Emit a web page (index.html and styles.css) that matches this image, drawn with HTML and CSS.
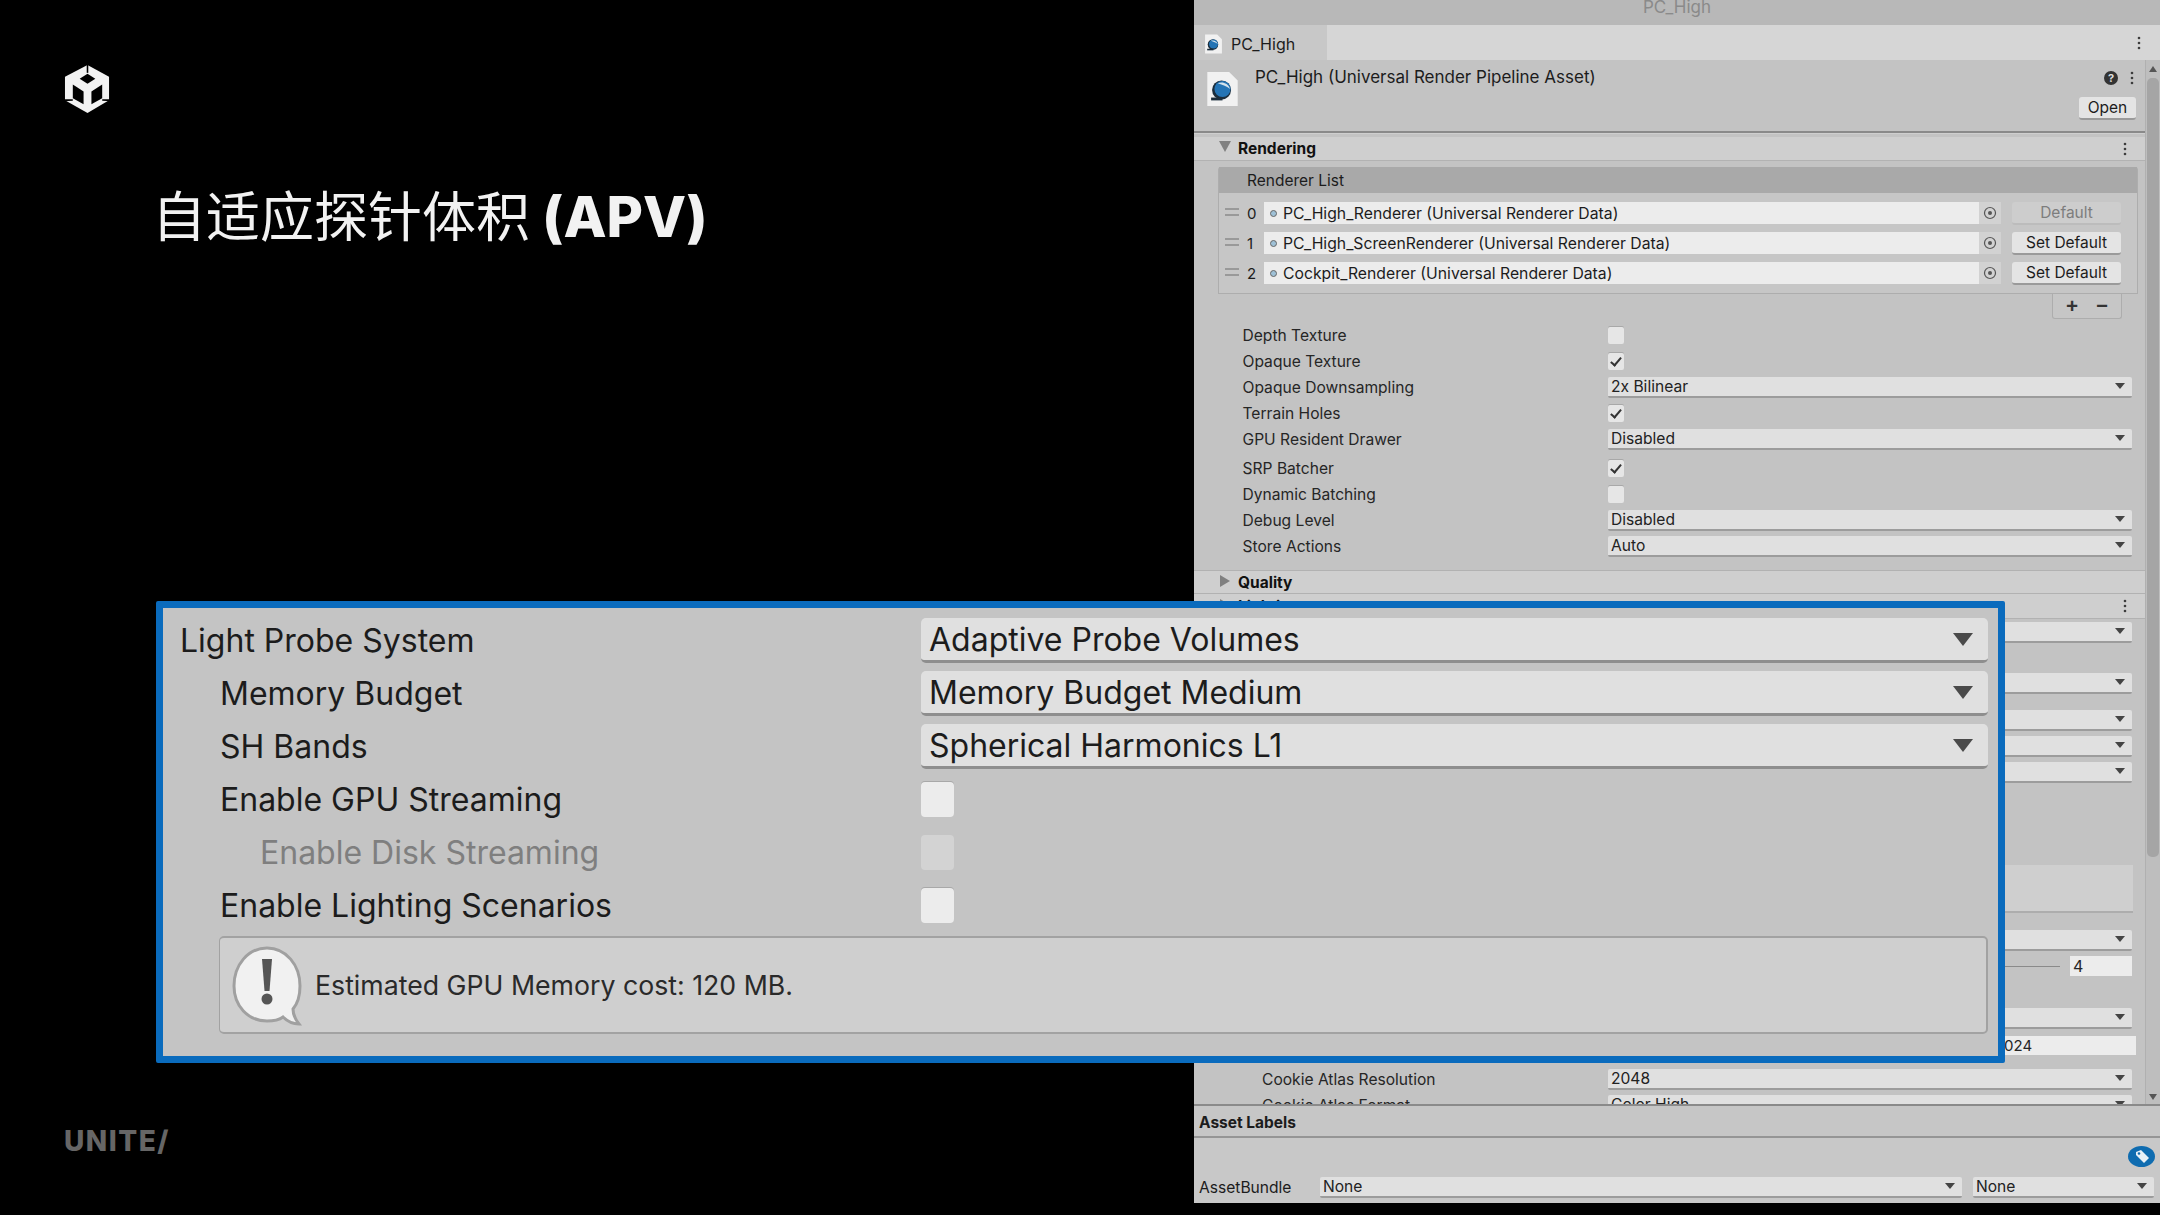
FILE: index.html

```html
<!DOCTYPE html>
<html lang="zh-CN">
<head>
  <meta charset="UTF-8">
  <title>自适应探针体积 (APV)</title>
  <link rel="stylesheet" href="styles.css">
</head>
<body>

<svg class="defs" width="0" height="0">
  <symbol id="kebab" viewBox="0 0 4 14">
    <circle cx="2" cy="2" r="1.3"/><circle cx="2" cy="7" r="1.3"/><circle cx="2" cy="12" r="1.3"/>
  </symbol>
  <symbol id="target" viewBox="0 0 14 14">
    <circle cx="7" cy="7" r="5.5" fill="none" stroke="#555" stroke-width="1.2"/>
    <circle cx="7" cy="7" r="2" fill="#555"/>
  </symbol>
  <symbol id="globe" viewBox="0 0 36 40">
    <path d="M2 2h23l9 9v27H2z" fill="#f1f1f1"/>
    <circle cx="17" cy="21" r="10" fill="#1b2d3c"/>
    <circle cx="18" cy="20" r="8.500" fill="#2474b5"/>
    <path d="M13 14c5-2 11 0 13 6-3-3-8-4-13-6z" fill="#d4e3ec"/>
    <path d="M6 29h12v3H6z" fill="#1b2d3c"/>
  </symbol>
</svg>

<section class="slide">
  <svg class="logo" viewBox="0 0 48 50">
    <path d="M24 0 46 12V36L24 49 1 36V12Z" fill="#f2f2f2"/>
    <g fill="#000">
      <path d="M23.2 0h1.6v8h-1.6z"/>
      <path d="M24 9 32 14 24 19 16 14Z"/>
      <path d="M9 20 20 27V40L9 34Z"/>
      <path d="M39 20 28 27V40L39 34Z"/>
      <path d="M0 35h9v1.5L0 37Z"/>
      <path d="M48 35h-9v1.5l9 .5Z"/>
    </g>
  </svg>
  <h1 class="title">自适应探针体积 <b>(APV)</b></h1>
  <div class="brand">UNITE/</div>
</section>

<aside class="inspector">
  <div class="titlebar">PC_High</div>
  <div class="tabbar">
    <div class="tab"><svg class="tab-icon"><use href="#globe"/></svg>PC_High</div>
    <svg class="kebab"><use href="#kebab"/></svg>
  </div>

  <div class="pane">
    <div class="pane-main">
      <div class="asset-head">
        <svg class="asset-icon"><use href="#globe"/></svg>
        <div class="asset-name">PC_High (Universal Render Pipeline Asset)</div>
        <div class="asset-side">
          <div class="asset-tools">
            <span class="help-dot">?</span>
            <svg class="kebab"><use href="#kebab"/></svg>
          </div>
          <div class="btn btn-open">Open</div>
        </div>
      </div>

      <div class="content">
        <div class="foldout foldout-first"><i class="tri-down"></i>Rendering<svg class="kebab"><use href="#kebab"/></svg></div>

        <div class="list">
          <div class="list-head">Renderer List</div>
          <div class="list-body">
            <div class="list-row">
              <i class="handle"></i><span class="idx">0</span>
              <div class="obj-field"><i class="obj-dot"></i>PC_High_Renderer (Universal Renderer Data)<svg class="target"><use href="#target"/></svg></div>
              <div class="btn btn-set is-off">Default</div>
            </div>
            <div class="list-row">
              <i class="handle"></i><span class="idx">1</span>
              <div class="obj-field"><i class="obj-dot"></i>PC_High_ScreenRenderer (Universal Renderer Data)<svg class="target"><use href="#target"/></svg></div>
              <div class="btn btn-set">Set Default</div>
            </div>
            <div class="list-row">
              <i class="handle"></i><span class="idx">2</span>
              <div class="obj-field"><i class="obj-dot"></i>Cockpit_Renderer (Universal Renderer Data)<svg class="target"><use href="#target"/></svg></div>
              <div class="btn btn-set">Set Default</div>
            </div>
          </div>
        </div>
        <div class="list-foot"><span>+</span><span>−</span></div>

        <div class="rows">
          <div class="row"><span>Depth Texture</span><i class="check"></i></div>
          <div class="row"><span>Opaque Texture</span><i class="check is-on"></i></div>
          <div class="row"><span>Opaque Downsampling</span><div class="drop">2x Bilinear<i class="caret"></i></div></div>
          <div class="row"><span>Terrain Holes</span><i class="check is-on"></i></div>
          <div class="row"><span>GPU Resident Drawer</span><div class="drop">Disabled<i class="caret"></i></div></div>
          <div class="row mt-3"><span>SRP Batcher</span><i class="check is-on"></i></div>
          <div class="row"><span>Dynamic Batching</span><i class="check"></i></div>
          <div class="row"><span>Debug Level</span><div class="drop">Disabled<i class="caret"></i></div></div>
          <div class="row"><span>Store Actions</span><div class="drop">Auto<i class="caret"></i></div></div>
        </div>

        <div class="foldout foldout-quality"><i class="tri-right"></i>Quality</div>
        <div class="foldout foldout-light"><i class="tri-right"></i>Lighting<svg class="kebab"><use href="#kebab"/></svg></div>

        <div class="row"><span></span><div class="drop"><i class="caret"></i></div></div>
        <div class="row mt-25"><span></span><div class="drop"><i class="caret"></i></div></div>
        <div class="row mt-11"><span></span><div class="drop"><i class="caret"></i></div></div>
        <div class="row"><span></span><div class="drop"><i class="caret"></i></div></div>
        <div class="row"><span></span><div class="drop"><i class="caret"></i></div></div>
        <div class="stub-box"></div>
        <div class="row mt-14"><span></span><div class="drop"><i class="caret"></i></div></div>
        <div class="row"><span></span><div class="slider"><i class="slider-line"></i><div class="num">4</div></div></div>
        <div class="row mt-26"><span></span><div class="drop"><i class="caret"></i></div></div>
        <div class="row mt-1"><span></span><div class="num num-wide">1024</div></div>
        <div class="row row-sub mt-8"><span>Cookie Atlas Resolution</span><div class="drop">2048<i class="caret"></i></div></div>
        <div class="row row-sub"><span>Cookie Atlas Format</span><div class="drop">Color High<i class="caret"></i></div></div>
      </div>
    </div>
    <div class="scrollbar">
      <i class="sb-up"></i>
      <div class="sb-thumb"></div>
      <i class="sb-down"></i>
    </div>
  </div>

  <div class="labels-head">Asset Labels</div>
  <div class="labels-body">
    <div class="tag-line">
      <svg class="tag" viewBox="0 0 27 21">
        <ellipse cx="13.500" cy="10.500" rx="13.500" ry="10.500" fill="#0f6cb0"/>
        <path d="M8 6l5-2 8 8-5 5-8-8z" fill="#e8f1f7"/>
        <circle cx="11" cy="7.500" r="1.300" fill="#0f6cb0"/>
      </svg>
    </div>
    <div class="bundle">
      <span class="bundle-label">AssetBundle</span>
      <div class="drop drop-main">None<i class="caret"></i></div>
      <div class="drop drop-variant">None<i class="caret"></i></div>
    </div>
  </div>
</aside>

<!-- blue callout sits over the inspector -->
<div class="callout">
  <div class="big-row"><span>Light Probe System</span><div class="big-drop">Adaptive Probe Volumes<i class="big-caret"></i></div></div>
  <div class="big-row lv1"><span>Memory Budget</span><div class="big-drop">Memory Budget Medium<i class="big-caret"></i></div></div>
  <div class="big-row lv1"><span>SH Bands</span><div class="big-drop">Spherical Harmonics L1<i class="big-caret"></i></div></div>
  <div class="big-row lv1"><span>Enable GPU Streaming</span><i class="big-check"></i></div>
  <div class="big-row lv2 is-off"><span>Enable Disk Streaming</span><i class="big-check"></i></div>
  <div class="big-row lv1"><span>Enable Lighting Scenarios</span><i class="big-check"></i></div>
  <div class="help-box">
    <svg class="help-icon" viewBox="0 0 71 82">
      <path d="M35 4C16 4 2 21 2 42c0 20 14 35 33 35 6 0 12-1 16-4 4 4 10 7 16 7-4-5-6-11-6-15 5-6 7-14 7-23C68 21 54 4 35 4z" fill="#f1f1f1" stroke="#a0a0a0" stroke-width="3"/>
      <path d="M30 15h10l-2.500 32h-5z" fill="#555"/>
      <circle cx="35" cy="55" r="5.500" fill="#555"/>
    </svg>
    <span>Estimated GPU Memory cost: 120 MB.</span>
  </div>
</div>

</body>
</html>
```

FILE: styles.css

```css
html, body {
  margin: 0;
  padding: 0;
  height: 1215px;
  overflow: hidden;
  background: #000;
}
body {
  position: relative;
  display: flex;
  width: 2160px;
  font-family: Inter, "Noto Sans", sans-serif;
  color: #1c1c1c;
}
.defs { position: absolute; }

/* slide */
.slide {
  width: 1194px;
  height: 1215px;
  box-sizing: border-box;
  padding: 65px 0 0 64px;
  display: flex;
  flex-direction: column;
  align-items: flex-start;
}
.logo { width: 47px; height: 49px; }
.title {
  margin: 64px 0 0 88px;
  font-family: "Noto Sans CJK SC", sans-serif;
  font-size: 54px;
  line-height: 72px;
  font-weight: 400;
  color: #f2f2f2;
  white-space: nowrap;
}
.title b { font-family: Inter, "Noto Sans CJK SC", sans-serif; font-weight: 800; font-size: 56px; }
.brand {
  margin-top: auto;
  margin-bottom: 59px;
  font-size: 28px;
  line-height: 30px;
  font-weight: 800;
  color: #666;
  letter-spacing: 1.500px;
}

/* inspector */
.inspector {
  width: 966px;
  height: 1203px;
  display: flex;
  flex-direction: column;
  background: #c3c3c3;
  font-size: 16px;
}
.titlebar {
  height: 25px;
  background: #b8b8b8;
  color: #8a8a8a;
  font-size: 17px;
  line-height: 15px;
  text-align: center;
  flex: none;
}
.tabbar {
  height: 35px;
  flex: none;
  background: #d6d6d6;
  display: flex;
  align-items: center;
  justify-content: space-between;
  padding-right: 19px;
}
.tab {
  width: 133px;
  height: 35px;
  box-sizing: border-box;
  padding: 2px 0 0 10px;
  display: flex;
  align-items: center;
  gap: 8px;
  background: #c8c8c8;
  font-size: 16px;
}
.tab-icon { width: 19px; height: 24px; }
.kebab { width: 4px; height: 14px; fill: #3c3c3c; flex: none; }

.pane { flex: 1; min-height: 0; display: flex; overflow: hidden; }
.pane-main { flex: 1; min-width: 0; }

.asset-head {
  height: 73px;
  box-sizing: border-box;
  display: flex;
  padding: 10px 9px 0 11px;
  border-bottom: 2px solid #8a8a8a;
  box-shadow: 0 1px 0 #cfcfcf;
}
.asset-icon { width: 35px; height: 38px; flex: none; }
.asset-name { flex: 1; margin: -3px 0 0 15px; line-height: 20px; font-size: 17px; }
.asset-side {
  display: flex;
  flex-direction: column;
  align-items: flex-end;
  gap: 10px;
  margin-top: -1px;
}
.asset-tools { display: flex; align-items: center; gap: 12px; height: 18px; margin-right: 2px; }
.help-dot {
  width: 14px;
  height: 14px;
  border-radius: 50%;
  background: #333;
  color: #ddd;
  font-size: 11px;
  line-height: 14px;
  font-weight: 700;
  text-align: center;
}
.btn {
  background: #e4e4e4;
  border-bottom: 2px solid #9a9a9a;
  border-radius: 3px;
  box-sizing: border-box;
  text-align: center;
  font-size: 15.500px;
}
.btn-open { width: 57px; height: 23px; line-height: 21px; }

.content { padding-top: 2px; }
.scrollbar {
  width: 15px;
  flex: none;
  display: flex;
  flex-direction: column;
  align-items: center;
  background: #bebebe;
  border-left: 1px solid #b0b0b0;
  box-sizing: border-box;
}
.sb-up, .sb-down {
  width: 0; height: 0;
  border-left: 4px solid transparent;
  border-right: 4px solid transparent;
}
.sb-up { border-bottom: 6px solid #555; margin-top: 6px; }
.sb-down { border-top: 6px solid #555; margin-top: auto; margin-bottom: 4px; }
.sb-thumb { width: 12px; height: 779px; margin-top: 6px; background: #a5a5a5; border-radius: 5px; }

.foldout {
  display: flex;
  align-items: center;
  gap: 7px;
  height: 24px;
  padding-left: 25px;
  padding-right: 18px;
  background: #cfcfcf;
  font-weight: 700;
  font-size: 15.500px;
  color: #111;
  border-bottom: 1px solid #b2b2b2;
  box-sizing: border-box;
}
.foldout .kebab { margin-left: auto; }
.foldout-first { margin-top: 2px; }
.foldout-quality { margin-top: 11px; border-top: 1px solid #b2b2b2; }
.foldout-light { height: 25px; }
.tri-down, .tri-right { width: 0; height: 0; flex: none; }
.tri-down {
  border-left: 6px solid transparent;
  border-right: 6px solid transparent;
  border-top: 11px solid #808080;
  margin-top: -4px;
}
.tri-right {
  border-top: 6px solid transparent;
  border-bottom: 6px solid transparent;
  border-left: 10px solid #808080;
  margin: -2px 1px 0 1px;
}

.list {
  margin: 6px 7px 0 24px;
  background: #c6c6c6;
  border: 1px solid #adadad;
  border-top: 0;
  border-radius: 3px 3px 0 0;
}
.list-head {
  height: 26px;
  line-height: 27px;
  padding-left: 28px;
  background: #a9a9a9;
  font-size: 15.500px;
}
.list-body { padding: 5px 0; }
.list-row {
  height: 30px;
  display: flex;
  align-items: center;
  padding-left: 6px;
}
.handle {
  width: 14px;
  height: 4px;
  border-top: 2px solid #999;
  border-bottom: 2px solid #999;
  margin-top: -3px;
}
.idx { width: 25px; padding-left: 8px; box-sizing: border-box; font-size: 15px; }
.obj-field {
  width: 737px;
  height: 22px;
  box-sizing: border-box;
  padding-left: 6px;
  display: flex;
  align-items: center;
  background: linear-gradient(90deg, #ececec 97%, #d2d2d2 97%);
  font-size: 15.750px;
  white-space: nowrap;
}
.obj-dot {
  width: 7px;
  height: 7px;
  margin-right: 6px;
  border-radius: 50%;
  border: 1px solid #666;
  box-sizing: border-box;
  background: #9ec0d6;
}
.target { width: 14px; height: 14px; margin-left: auto; margin-right: 4px; }
.btn-set { width: 109px; height: 23px; margin-left: 11px; line-height: 21px; }
.btn.is-off { background: #cdcdcd; color: #7d7d7d; border-bottom-color: #bcbcbc; }
.list-foot {
  width: 70px;
  height: 25px;
  margin: 0 0 0 auto;
  position: relative;
  left: -23px;
  box-sizing: border-box;
  display: flex;
  justify-content: space-around;
  padding: 0 4px;
  background: #c6c6c6;
  border: 1px solid #adadad;
  border-top: 0;
  border-radius: 0 0 3px 3px;
  font-size: 21px;
  line-height: 22px;
  font-weight: 600;
  color: #333;
}
.rows { margin-top: 3px; }
.row {
  height: 26px;
  display: grid;
  grid-template-columns: 414px 1fr;
  align-items: center;
  padding-right: 13px;
  font-size: 15.600px;
  color: #262626;
}
.row > span { padding-left: 48.500px; white-space: nowrap; }
.row-sub > span { padding-left: 68px; }
.mt-1 { margin-top: 1px; }
.mt-3 { margin-top: 3px; }
.mt-8 { margin-top: 8px; }
.mt-11 { margin-top: 11px; }
.mt-14 { margin-top: 14px; }
.mt-25 { margin-top: 25px; }
.mt-26 { margin-top: 26px; }

.check {
  position: relative;
  display: block;
  width: 16px;
  height: 17px;
  background: #e6e6e6;
  border-radius: 2px;
  box-shadow: 0 -1px 0 #a8a8a8;
}
.check.is-on::after {
  content: "";
  position: absolute;
  left: 5px;
  top: 2px;
  width: 4px;
  height: 9px;
  border: solid #333;
  border-width: 0 2px 2px 0;
  transform: rotate(40deg);
}
.drop {
  height: 21px;
  box-sizing: border-box;
  padding-left: 3px;
  display: flex;
  align-items: center;
  justify-content: space-between;
  padding-right: 7px;
  background: #e0e0e0;
  border-bottom: 2px solid #9c9c9c;
  border-radius: 2px;
  line-height: 19px;
  color: #222;
}
.caret {
  width: 0;
  height: 0;
  margin-left: auto;
  border-left: 5px solid transparent;
  border-right: 5px solid transparent;
  border-top: 6px solid #444;
}
.stub-box {
  height: 48px;
  margin: 80px 12px 0 68px;
  background: #cfcfcf;
  border-bottom: 2px solid #adadad;
  box-sizing: border-box;
}
.slider { display: flex; align-items: center; gap: 10px; }
.slider-line { flex: 1; height: 1px; background: #8a8a8a; }
.num {
  width: 62px;
  height: 20px;
  line-height: 20px;
  padding-left: 3px;
  box-sizing: border-box;
  background: #ececec;
  font-size: 16px;
}
.num-wide {
  width: 150px;
  height: 19px;
  line-height: 19px;
  margin-right: -4px;
  padding-left: 12px;
  justify-self: end;
  font-size: 15px;
}

.labels-head {
  height: 34px;
  flex: none;
  box-sizing: border-box;
  padding-left: 5px;
  line-height: 33px;
  font-weight: 700;
  font-size: 15.500px;
  background: #c6c6c6;
  border-top: 2px solid #8a8a8a;
  border-bottom: 2px solid #959595;
}
.labels-body { height: 65px; flex: none; box-sizing: border-box; padding: 5px 5px 0 5px; background: #c8c8c8; }
.tag-line { height: 27px; display: flex; justify-content: flex-end; }
.tag { width: 27px; height: 21px; margin-top: 3px; }
.bundle { display: flex; align-items: center; height: 26px; margin-top: 4px; font-size: 15.600px; }
.bundle-label { width: 121px; flex: none; }
.drop-main { width: 642px; margin-right: 11px; }
.drop-variant { width: 181px; }

/* callout over the inspector */
.callout {
  position: absolute;
  left: 156px;
  top: 601px;
  width: 1849px;
  height: 462px;
  box-sizing: border-box;
  padding: 6px 10px 0 17px;
  background: #c4c4c4;
  border: 7px solid #0a6bbd;
  border-radius: 2px;
}
.big-row {
  height: 53px;
  display: grid;
  grid-template-columns: 741px 1fr;
  align-items: center;
  font-size: 32px;
  color: #1c1c1c;
}
.big-row > span { white-space: nowrap; }
.lv1 > span { padding-left: 40px; }
.lv2 > span { padding-left: 80px; }
.big-row.is-off { color: #7f7f7f; }
.big-drop {
  height: 45px;
  box-sizing: border-box;
  display: flex;
  align-items: center;
  padding: 0 15px 0 8px;
  background: #e0e0e0;
  border-bottom: 3px solid #8e8e8e;
  border-radius: 5px;
  color: #1c1c1c;
}
.big-caret {
  width: 0;
  height: 0;
  margin-left: auto;
  border-left: 10px solid transparent;
  border-right: 10px solid transparent;
  border-top: 13px solid #4a4a4a;
}
.big-check {
  display: block;
  width: 33px;
  height: 35px;
  background: #ececec;
  border-radius: 4px;
  box-shadow: 0 -1px 0 #a8a8a8;
}
.is-off .big-check { background: #d3d3d3; box-shadow: none; }
.help-box {
  height: 98px;
  margin: 4px 0 0 39px;
  box-sizing: border-box;
  display: flex;
  align-items: center;
  gap: 12px;
  padding-left: 12px;
  background: #cfcfcf;
  border: 2px solid #a2a2a2;
  border-left-width: 1px;
  border-radius: 5px;
  font-size: 26.700px;
  color: #2a2a2a;
}
.help-icon { width: 71px; height: 82px; flex: none; }
```
